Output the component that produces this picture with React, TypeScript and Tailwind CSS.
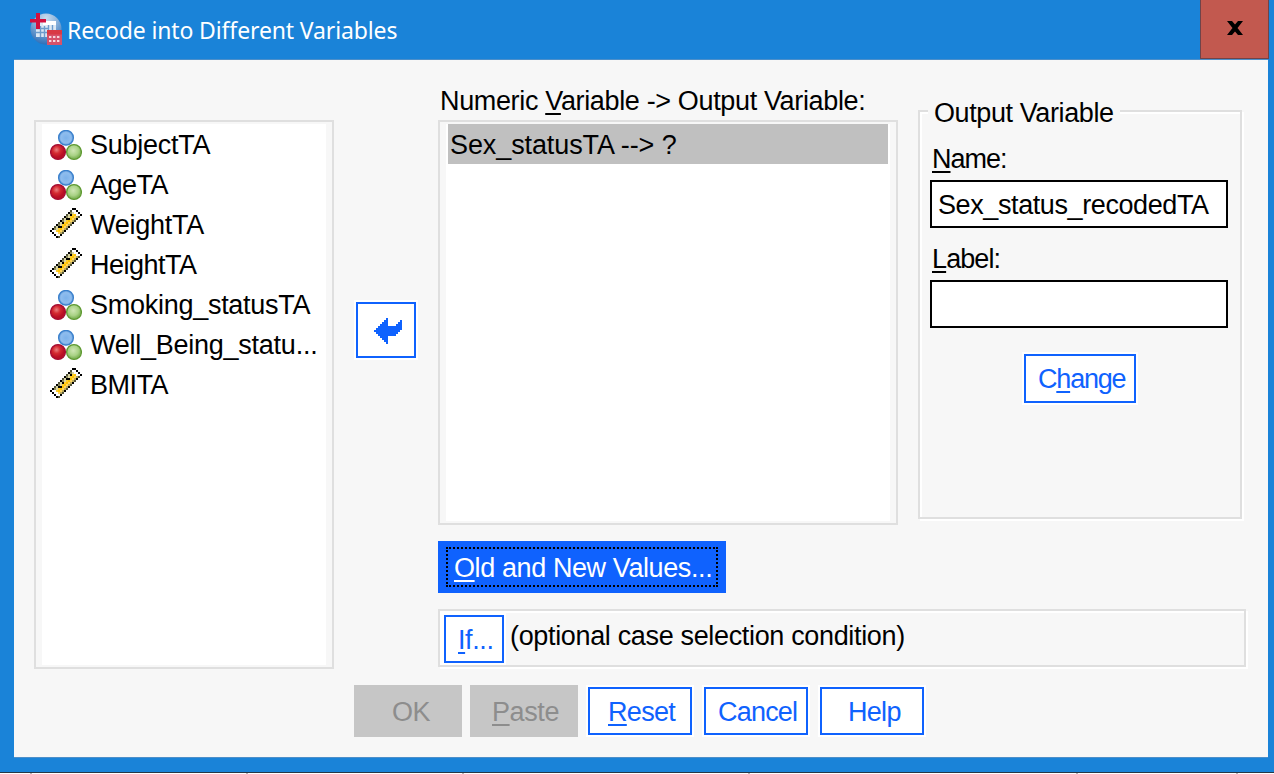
import React from "react";

function AppIcon() {
  return (
    <svg className="ml-[30px] mt-[13px] h-8 w-8 shrink-0" viewBox="0 0 32 32">
      <defs>
        <radialGradient id="globe" cx="0.5" cy="0.15" r="0.85">
          <stop offset="0" stopColor="#c9dcee" />
          <stop offset="0.5" stopColor="#7fabd8" />
          <stop offset="1" stopColor="#2f6fb8" />
        </radialGradient>
      </defs>
      <circle cx="16" cy="16" r="15.5" fill="url(#globe)" />
      <rect x="6" y="8" width="20" height="16" fill="#dce8f4" />
      <rect x="13" y="8" width="13" height="4" fill="#fff" />
      <path d="M6 15.5H18M6 19.5H18M10.5 13V24M14.5 13V24M18.5 12V17M22.500 12V17" stroke="#6d9ccc" strokeWidth="1.400" />
      <path d="M6 0H10V6H16V9.500H10V16H6V9.500H0V6H6Z" fill="#d3103f" />
      <rect x="17" y="17" width="15" height="15" fill="#d6526a" />
      <rect x="17" y="17" width="15" height="4.500" fill="#d93a45" />
      <path d="M19 24H31M19 28H31" stroke="#f6d5dc" strokeWidth="2.200" strokeDasharray="2.400 1.600" />
    </svg>
  );
}

function Nominal() {
  return (
    <svg className="h-8 w-8 shrink-0" viewBox="0 0 32 32">
      <defs>
        <radialGradient id="blue">
          <stop offset="0" stopColor="#7db2ea" />
          <stop offset="0.7" stopColor="#8fbdee" />
          <stop offset="1" stopColor="#5b96d8" />
        </radialGradient>
        <radialGradient id="red" cx="0.4" cy="0.35">
          <stop offset="0" stopColor="#e88080" />
          <stop offset="0.5" stopColor="#d42a32" />
          <stop offset="1" stopColor="#b80f25" />
        </radialGradient>
        <radialGradient id="green" cx="0.45" cy="0.4">
          <stop offset="0" stopColor="#cfe6b4" />
          <stop offset="0.7" stopColor="#a9d285" />
          <stop offset="1" stopColor="#86b860" />
        </radialGradient>
      </defs>
      <circle cx="16" cy="7.800" r="7.400" fill="url(#blue)" stroke="#3a80cc" strokeWidth="1.300" />
      <circle cx="8" cy="22" r="7.400" fill="url(#red)" stroke="#a50d34" strokeWidth="1.300" />
      <circle cx="24" cy="22" r="7.400" fill="url(#green)" stroke="#5f9a32" strokeWidth="1.300" />
    </svg>
  );
}

// Colour of one cell of the 16x15 ruler, which runs along the rising diagonal.
function rulerCell(x: number, y: number): string | null {
  const across = x + y;
  const along = x - y;
  if (across < 11 || across > 18 || along < -11 || along > 12) return null;
  if (along === -11 || along === 12) return "#000";
  if (across === 11 || across === 18) return ((along + 21) >> 1) % 2 === 0 ? "#000" : "#55553a";
  if (along <= -9 || along >= 10) return "#fff";
  if (across === 12) return ((along + 20) >> 1) % 2 === 0 ? "#8a8a5e" : "#d6d2a4";
  if (across === 13) return (along + 21) % 4 === 0 ? "#000" : "#dcd5a0";
  if (across === 17) return "#b9a85a";
  if (across === 14) return (along + 20) % 8 === 0 ? "#000" : "#ffcf2e";
  return across === 15 ? "#ffc400" : "#ffd45c";
}

const rulerCells = Array.from({ length: 240 }, (_, i) => {
  const x = i % 16;
  const y = Math.floor(i / 16);
  return { x, y, fill: rulerCell(x, y) };
}).filter((cell) => cell.fill !== null);

function Scale() {
  return (
    <svg className="-mt-0.5 h-8 w-8 shrink-0" viewBox="0 0 16 16" shapeRendering="crispEdges">
      {rulerCells.map((c) => (
        <rect key={`${c.x}-${c.y}`} x={c.x} y={c.y} width="1" height="1" fill={c.fill ?? "none"} />
      ))}
    </svg>
  );
}

const variables = [
  { name: "SubjectTA", kind: "nominal", tracking: "tracking-[-0.25px]" },
  { name: "AgeTA", kind: "nominal", tracking: "tracking-[-0.5px]" },
  { name: "WeightTA", kind: "scale", tracking: "tracking-[-0.25px]" },
  { name: "HeightTA", kind: "scale", tracking: "tracking-[-0.5px]" },
  { name: "Smoking_statusTA", kind: "nominal", tracking: "tracking-[-0.27px]" },
  { name: "Well_Being_statu...", kind: "nominal", tracking: "tracking-[-0.25px]" },
  { name: "BMITA", kind: "scale", tracking: "tracking-[-0.5px]" },
];

function Key({ children }: { children: React.ReactNode }) {
  return <span className="underline decoration-2 underline-offset-[3px] [text-decoration-skip-ink:none]">{children}</span>;
}

const outlined = "shrink-0 border-2 border-[#0f62fe] bg-white text-left text-[#0f62fe] shadow-[0_0_0_2px_#fff]";
const etched = "border-2 border-[#dfdfdf] shadow-[2px_2px_0_#fff,inset_2px_2px_0_#fff]";

export default function App() {
  return (
    <div className="flex h-[774px] w-[1274px] flex-col overflow-hidden bg-[#1a83d8] font-['Liberation_Sans',sans-serif] text-[27px] leading-[30px] tracking-[-0.4px] whitespace-nowrap text-black">
      <header className="flex h-[59px] shrink-0">
        <AppIcon />
        <h1 className="mt-[15px] ml-[5px] flex-1 font-['Noto_Sans',sans-serif] text-[23px] tracking-[-0.13px] text-white">Recode into Different Variables</h1>
        <button className="mr-[5px] flex h-[59px] w-[69px] justify-center border border-t-0 border-[#704348] bg-[#c2594f]">
          <svg className="mt-[21px] h-[14px] w-4" viewBox="0 0 16 14">
            <path d="M0 0H5L8 3.500L11 0H16L10.500 7L16 14H11L8 10.500L5 14H0L5.500 7Z" fill="#000" />
          </svg>
        </button>
      </header>
      <main className="mr-[6px] ml-[14px] flex h-[699px] shrink-0 flex-col border-t border-b border-[#4d8fc9] bg-[#f7f7f7]">
        <div className="flex h-[609px] shrink-0">
          <ul className="mt-[60px] ml-5 h-[549px] w-[300px] shrink-0 border-2 border-[#dfdfdf] bg-white px-1.5 py-0.5 shadow-[inset_0_0_0_2px_#f7f7f7,inset_6px_0_0_#f7f7f7,inset_-6px_0_0_#f7f7f7]">
            {variables.map((v) => (
              <li key={v.name} className="flex h-10 pt-1.5 pl-2">
                {v.kind === "nominal" ? <Nominal /> : <Scale />}
                <span className={`ml-2 ${v.tracking}`}>{v.name}</span>
              </li>
            ))}
          </ul>
          <button className={`mt-[242px] ml-[22px] flex h-[56px] w-[60px] ${outlined}`}>
            <svg className="mt-[14px] ml-4 h-[26px] w-7" viewBox="0 0 28 26" shapeRendering="crispEdges">
              <path d="M0 12H2V10H4V8H6V6H8V4H10V2H12V0H14V8H22V6H24V4H26V2H28V12H26V14H24V16H22V18H14V26H12V24H10V22H8V20H6V18H4V16H2V14H0Z" fill="#0f62fe" />
            </svg>
          </button>
          <div className="ml-[22px] flex w-[808px] shrink-0 flex-col">
            <div className="flex h-[465px] shrink-0">
              <section className="w-[460px] shrink-0 pt-[26px]">
                <p className="h-[34px] pl-0.5 tracking-[-0.35px]">Numeric <Key>V</Key>ariable -&gt; Output Variable:</p>
                <div className="h-[405px] border-2 border-[#dfdfdf] bg-white px-2 py-0.5 shadow-[inset_0_0_0_2px_#f7f7f7,inset_6px_0_0_#f7f7f7,inset_-6px_0_0_#f7f7f7]">
                  <div className="h-10 bg-[#c0c0c0] pt-1.5 pl-0.5 tracking-[-0.1px]">Sex_statusTA --&gt; ?</div>
                </div>
              </section>
              <section className={`mt-[50px] ml-5 h-[409px] w-[324px] shrink-0 px-2.5 ${etched}`}>
                <h2 className="-mt-[14px] -ml-0.5 w-[192px] bg-[#f7f7f7] pl-1.5">Output Variable</h2>
                <label className="mt-4 block pl-0.5 tracking-[-1px]"><Key>N</Key>ame:</label>
                <input className="mt-1.5 block h-12 w-[298px] border-2 border-black bg-white px-1.5 pt-0.5 tracking-[-0.4px]" defaultValue="Sex_status_recodedTA" />
                <label className="mt-4 block pl-0.5 tracking-[-0.9px]"><Key>L</Key>abel:</label>
                <input className="mt-1.5 block h-12 w-[298px] border-2 border-black bg-white px-1.5" />
                <button className={`mt-[26px] ml-[94px] block h-[49px] w-[112px] pl-3 tracking-[-1.2px] ${outlined}`}>C<Key>h</Key>ange</button>
              </section>
            </div>
            <button className="mt-4 h-[52px] w-[288px] shrink-0 bg-[#0f62fe] px-2 py-1.5 text-left text-white">
              <span className="block h-10 border-2 border-dotted border-black pt-1 pl-1.5"><Key>O</Key>ld and New Values...</span>
            </button>
            <section className={`mt-4 flex h-[58px] shrink-0 ${etched}`}>
              <button className={`mt-1 ml-1 h-12 w-[60px] pt-0.5 pl-3 ${outlined}`}><Key>I</Key>f...</button>
              <span className="mt-[10px] ml-1.5 tracking-[-0.34px]">(optional case selection condition)</span>
            </section>
          </div>
        </div>
        <footer className="mt-4 flex h-[52px] shrink-0 pl-[340px]">
          <button className="w-[108px] bg-[#c6c6c6] pt-0.5 pl-[38px] text-left text-[#8d8d8d]">OK</button>
          <button className="ml-2 w-[108px] bg-[#c6c6c6] pt-0.5 pl-[22px] text-left text-[#8d8d8d]"><Key>P</Key>aste</button>
          <button className={`my-0.5 ml-2.5 w-[104px] pt-0.5 pl-[18px] tracking-[-0.7px] ${outlined}`}><Key>R</Key>eset</button>
          <button className={`my-0.5 ml-3 w-[104px] pt-0.5 pl-3 tracking-[-0.8px] ${outlined}`}>Cancel</button>
          <button className={`my-0.5 ml-3 w-[104px] pt-0.5 pl-[26px] tracking-[-0.7px] ${outlined}`}>Help</button>
        </footer>
      </main>
      <div className="mt-[14px] h-px shrink-0 bg-[#263746]" />
      <div className="flex h-px shrink-0 bg-white pl-[30px]">
        <i className="w-0.5 bg-[#b5b5b5]" />
        <i className="ml-[214px] w-0.5 bg-[#b5b5b5]" />
        <i className="ml-[214px] w-0.5 bg-[#b5b5b5]" />
        <i className="ml-[284px] w-0.5 bg-[#b5b5b5]" />
        <i className="ml-[326px] w-0.5 bg-[#b5b5b5]" />
        <i className="ml-[158px] w-0.5 bg-[#b5b5b5]" />
      </div>
    </div>
  );
}
